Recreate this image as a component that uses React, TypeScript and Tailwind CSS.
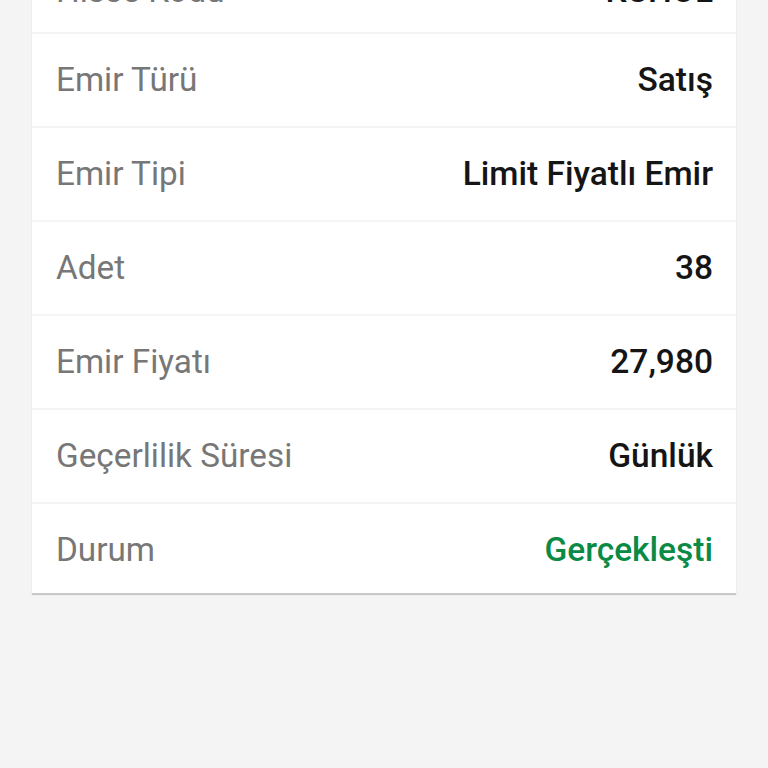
const rows: { label: string; value: string; tone?: 'green' }[] = [
  { label: 'Hisse Kodu', value: 'KCHOL' },
  { label: 'Emir Türü', value: 'Satış' },
  { label: 'Emir Tipi', value: 'Limit Fiyatlı Emir' },
  { label: 'Adet', value: '38' },
  { label: 'Emir Fiyatı', value: '27,980' },
  { label: 'Geçerlilik Süresi', value: 'Günlük' },
  { label: 'Durum', value: 'Gerçekleşti', tone: 'green' },
];

export default function App() {
  return (
    <div
      className="min-h-[768px] w-full overflow-hidden bg-[#f4f4f4]"
      style={{ fontFamily: 'Roboto, "Noto Sans", sans-serif' }}
    >
      <div className="mx-[32px] mt-[-60px] flex flex-col gap-[2px] bg-[#f4f4f4] shadow-[0_2px_1px_rgba(0,0,0,0.18)]">
        {rows.map((row, i) => (
          <div
            key={row.label}
            className={
              i === 0
                ? 'flex h-[92px] items-center justify-between bg-white pl-[24px] pr-[23px] pt-[10px]'
                : i === rows.length - 1
                  ? 'flex h-[89px] items-center justify-between bg-white pl-[24px] pr-[23px] pt-[2px]'
                  : 'flex h-[92px] items-center justify-between bg-white pl-[24px] pr-[23px]'
            }
          >
            <span className="text-[33.3px] leading-none text-[#777777]">{row.label}</span>
            <span
              className={
                row.tone === 'green'
                  ? 'text-[33.5px] leading-none font-medium text-[#0b8a45]'
                  : 'text-[33.5px] leading-none font-medium text-[#151515]'
              }
            >
              {row.value}
            </span>
          </div>
        ))}
      </div>
    </div>
  );
}
